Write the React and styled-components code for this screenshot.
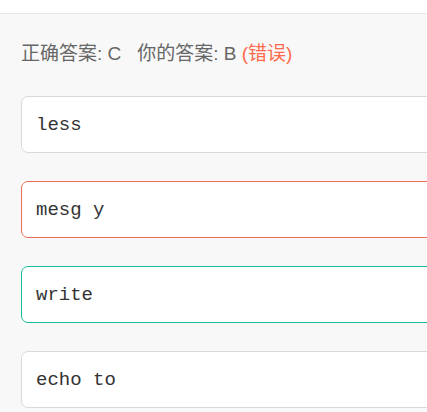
import styled, { createGlobalStyle } from 'styled-components';

const GlobalStyle = createGlobalStyle`
    body {
        margin: 0;
        background: #ffffff;
        font-family: 'Liberation Sans', Arial, 'Noto Sans CJK SC', sans-serif;
    }
`;

const TopBar = styled.div`
    height: 13px;
    background: #ffffff;
    border-bottom: 1px solid #e6e6e6;
`;

const Panel = styled.div`
    background: #f8f8f8;
    padding: 26px 0 0 21px;
    min-height: 398px;
    box-sizing: border-box;
    overflow: hidden;
`;

const Result = styled.div`
    font-size: 19px;
    line-height: 28px;
    color: #666666;
    margin-bottom: 28px;
    white-space: nowrap;
`;

const Mine = styled.span`
    margin-left: 16px;
`;

const Wrong = styled.span`
    color: #ff6a4d;
`;

const Options = styled.div`
    display: flex;
    flex-direction: column;
    gap: 28px;
`;

const borders = {
    normal: '#d9d9d9',
    wrong: '#f07057',
    right: '#1bbc9b',
};

const Option = styled.div`
    width: 460px;
    height: 57px;
    box-sizing: border-box;
    background: #ffffff;
    border: 1px solid ${(p) => borders[p.$state || 'normal']};
    border-radius: 7px;
    display: flex;
    align-items: center;
    padding-left: 14px;
    font-family: 'Liberation Mono', 'Courier New', monospace;
    font-size: 19px;
    color: #333333;
`;

const options = [
    { text: 'less' },
    { text: 'mesg y', state: 'wrong' },
    { text: 'write', state: 'right' },
    { text: 'echo to' },
];

export default function App() {
    return (
        <>
            <GlobalStyle />
            <TopBar />
            <Panel>
                <Result>
                    正确答案: C<Mine>你的答案: B</Mine> <Wrong>(错误)</Wrong>
                </Result>
                <Options>
                    {options.map((o) => (
                        <Option key={o.text} $state={o.state}>
                            {o.text}
                        </Option>
                    ))}
                </Options>
            </Panel>
        </>
    );
}
